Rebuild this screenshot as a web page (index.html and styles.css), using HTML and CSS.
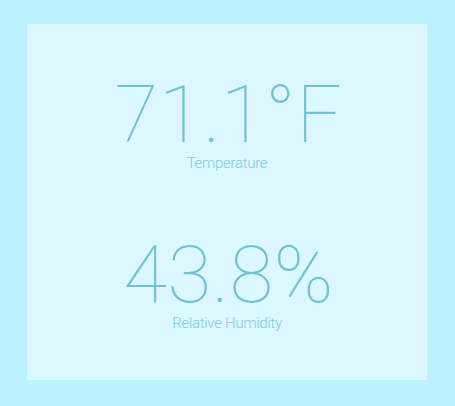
FILE: index.html
```html
<!DOCTYPE html>
<html>
<head>
<meta charset="utf-8">
<link rel="stylesheet" href="styles.css">
</head>
<body>
<div class="panel">
  <div class="reading">
    <div class="value">71.1°F</div>
    <div class="label">Temperature</div>
  </div>
  <div class="reading">
    <div class="value">43.8%</div>
    <div class="label">Relative Humidity</div>
  </div>
</div>
</body>
</html>
```
FILE: styles.css
```css
html, body {
  margin: 0;
  padding: 0;
  background: #bdf1ff;
}
body {
  padding: 24px 28px 26px 27px;
  font-family: Roboto, "Helvetica Neue", sans-serif;
}
.panel {
  width: 400px;
  height: 356px;
  background: #dcf7ff;
  display: flex;
  flex-direction: column;
  align-items: center;
  padding-top: 61px;
  box-sizing: border-box;
  gap: 74px;
}
.reading {
  display: flex;
  flex-direction: column;
  align-items: center;
}
.value {
  font-size: 80px;
  font-weight: 100;
  line-height: 60px;
  letter-spacing: 0.5px;
  padding-left: 3px;
  color: #6cc3d5;
}
.label {
  font-size: 15px;
  font-weight: 300;
  line-height: 16px;
  color: #7ccbdd;
  margin-top: 10px;
  letter-spacing: -0.3px;
}
```
